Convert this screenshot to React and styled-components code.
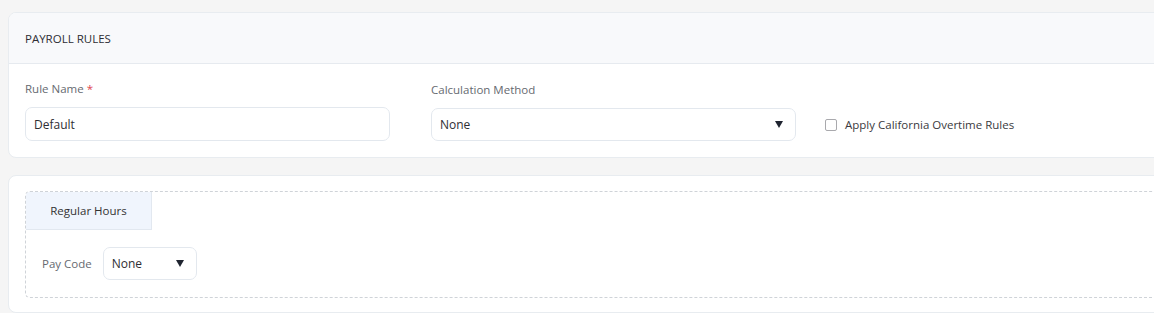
import React from "react";
import styled, { createGlobalStyle } from "styled-components";

const GlobalStyle = createGlobalStyle`
  html, body {
    margin: 0;
    padding: 0;
    background: #f5f5f5;
    overflow: hidden;
    font-family: "Open Sans", "Noto Sans", sans-serif;
    color: #333;
  }
`;

const Page = styled.div`
  display: flex;
  flex-direction: column;
  gap: 17px;
  padding: 12px 0 0 8px;
  width: 1180px;
`;

const Card = styled.div`
  background: #fff;
  border: 1px solid #e8ecf0;
  border-radius: 8px;
  overflow: hidden;
`;

const CardHeader = styled.div`
  height: 50px;
  display: flex;
  align-items: center;
  padding: 0 16px;
  background: #f8f9fb;
  border-bottom: 1px solid #e6eaef;
  font-size: 11.5px;
  font-weight: 500;
  color: #2d2d33;
`;

const CardBody = styled.div`
  display: flex;
  align-items: flex-end;
  gap: 41px;
  padding: 17px 16px 16px;
`;

const Field = styled.div`
  display: flex;
  flex-direction: column;
  gap: 10px;
  width: ${(p) => p.$width || 365}px;
`;

const Label = styled.label`
  font-size: 11.5px;
  color: #666a70;
  line-height: 16px;
`;

const Required = styled.span`
  color: #e0454f;
  margin-left: 3px;
`;

const Input = styled.div`
  box-sizing: border-box;
  height: ${(p) => p.$height || 34}px;
  border: 1px solid #e3e8ee;
  border-radius: 7px;
  display: flex;
  align-items: center;
  padding: 0 8px;
  font-size: 12px;
  color: #2e2e33;
`;

const Select = styled(Input)`
  justify-content: space-between;
  padding: 0 12px 0 8px;
  width: ${(p) => (p.$width ? `${p.$width}px` : "auto")};
`;

const Caret = styled.span`
  width: 0;
  height: 0;
  border-left: 4px solid transparent;
  border-right: 4px solid transparent;
  border-top: 7px solid #1f2430;
`;

const CheckRow = styled.div`
  display: flex;
  align-items: center;
  gap: 8px;
  height: 33px;
  margin-left: -12px;
  font-size: 11.5px;
  color: #3a3a40;
`;

const Box = styled.span`
  box-sizing: border-box;
  width: 12px;
  height: 12px;
  border: 1px solid #a9a9ad;
  border-radius: 2px;
  background: #fff;
`;

const SecondBody = styled.div`
  padding: 15px 0 14px 16px;
`;

const Dashed = styled.div`
  border: 1px dashed #cfd3d8;
  border-right: none;
  border-radius: 5px 0 0 5px;
  height: 107px;
  box-sizing: border-box;
`;

const Tab = styled.div`
  width: 126px;
  height: 38px;
  display: flex;
  align-items: center;
  justify-content: center;
  background: #f0f5fd;
  border-right: 1px solid #e2e8f0;
  border-bottom: 1px solid #e2e8f0;
  border-top-left-radius: 4px;
  font-size: 11.5px;
  color: #333;
  box-sizing: border-box;
`;

const PayRow = styled.div`
  display: flex;
  align-items: center;
  gap: 11px;
  padding: 17px 16px 0;
`;

export default function App() {
  return (
    <>
      <GlobalStyle />
      <Page>
        <Card>
          <CardHeader>PAYROLL RULES</CardHeader>
          <CardBody>
            <Field>
              <Label>
                Rule Name<Required>*</Required>
              </Label>
              <Input>Default</Input>
            </Field>
            <Field>
              <Label>Calculation Method</Label>
              <Select $height={33}>
                None
                <Caret />
              </Select>
            </Field>
            <CheckRow>
              <Box />
              Apply California Overtime Rules
            </CheckRow>
          </CardBody>
        </Card>
        <Card>
          <SecondBody>
            <Dashed>
              <Tab>Regular Hours</Tab>
              <PayRow>
                <Label>Pay Code</Label>
                <Select $width={94} $height={33}>
                  None
                  <Caret />
                </Select>
              </PayRow>
            </Dashed>
          </SecondBody>
        </Card>
      </Page>
    </>
  );
}
